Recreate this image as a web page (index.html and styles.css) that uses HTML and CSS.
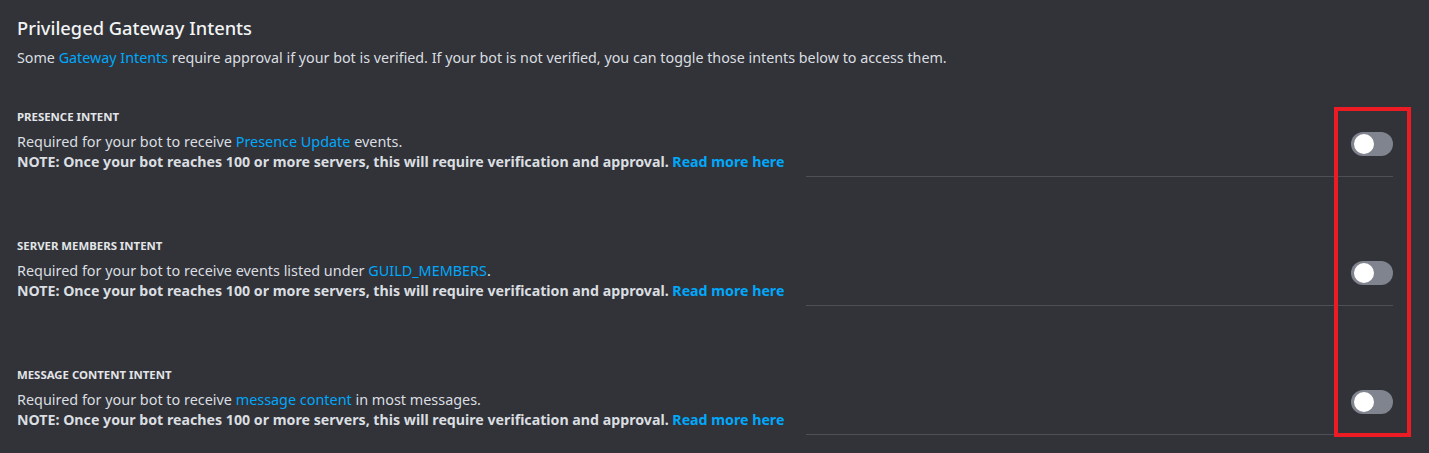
FILE: index.html
```html
<!DOCTYPE html>
<html lang="en">
<head>
<meta charset="utf-8">
<title>Privileged Gateway Intents</title>
<link rel="stylesheet" href="styles.css">
</head>
<body>
<div class="page">
  <h2 class="title">Privileged Gateway Intents</h2>
  <p class="desc">Some <a class="link">Gateway Intents</a> require approval if your bot is verified. If your bot is not verified, you can toggle those intents below to access them.</p>

  <div class="intents">
    <section class="intent">
      <div class="label">Presence Intent</div>
      <div class="row">
        <div class="text">
          <div class="line">Required for your bot to receive <a class="link">Presence Update</a> events.</div>
          <div class="line note">NOTE: Once your bot reaches 100 or more servers, this will require verification and approval. <a class="link">Read more here</a></div>
        </div>
        <div class="switch"><span class="knob"></span></div>
      </div>
      <div class="divider"></div>
    </section>

    <section class="intent">
      <div class="label">Server Members Intent</div>
      <div class="row">
        <div class="text">
          <div class="line">Required for your bot to receive events listed under <a class="link">GUILD_MEMBERS</a>.</div>
          <div class="line note">NOTE: Once your bot reaches 100 or more servers, this will require verification and approval. <a class="link">Read more here</a></div>
        </div>
        <div class="switch"><span class="knob"></span></div>
      </div>
      <div class="divider"></div>
    </section>

    <section class="intent">
      <div class="label">Message Content Intent</div>
      <div class="row">
        <div class="text">
          <div class="line">Required for your bot to receive <a class="link">message content</a> in most messages.</div>
          <div class="line note">NOTE: Once your bot reaches 100 or more servers, this will require verification and approval. <a class="link">Read more here</a></div>
        </div>
        <div class="switch"><span class="knob"></span></div>
      </div>
      <div class="divider"></div>
    </section>
  </div>

  <div class="highlight"></div>
</div>
</body>
</html>
```

FILE: styles.css
```css
html, body {
  margin: 0;
  padding: 0;
  background: #313338;
  height: 100%;
  overflow: hidden;
}

.page {
  position: relative;
  padding: 16px 36px 0 17px;
  font-family: "Noto Sans", "Open Sans", sans-serif;
  color: #dbdee1;
}

.title {
  margin: 0;
  font-size: 18.3px;
  line-height: 24px;
  font-weight: 500;
  color: #f2f3f5;
}

.desc {
  margin: 8px 0 0;
  font-size: 14.3px;
  line-height: 20px;
}

.link {
  color: #00a8fc;
  text-decoration: none;
}

.intents {
  display: flex;
  flex-direction: column;
  gap: 61px;
  margin-top: 41px;
}

.label {
  font-size: 11.4px;
  line-height: 16px;
  font-weight: 700;
  text-transform: uppercase;
  color: #e3e5e8;
}

.row {
  display: flex;
  align-items: flex-start;
  justify-content: space-between;
  margin-top: 7px;
}

.line {
  font-size: 14.4px;
  line-height: 20px;
}

.note {
  font-size: 14.2px;
  font-weight: 700;
}

.switch {
  position: relative;
  width: 42px;
  height: 24px;
  border-radius: 12px;
  background: #80848e;
  flex: none;
}

.knob {
  position: absolute;
  left: 3px;
  top: 2px;
  width: 20px;
  height: 20px;
  border-radius: 50%;
  background: #ffffff;
}

.divider {
  height: 1px;
  margin: 4px 0 0 789px;
  background: #4e5058;
}

.highlight {
  position: absolute;
  left: 1334px;
  top: 107px;
  width: 69px;
  height: 322px;
  border: 4px solid #ed1c24;
}
```
